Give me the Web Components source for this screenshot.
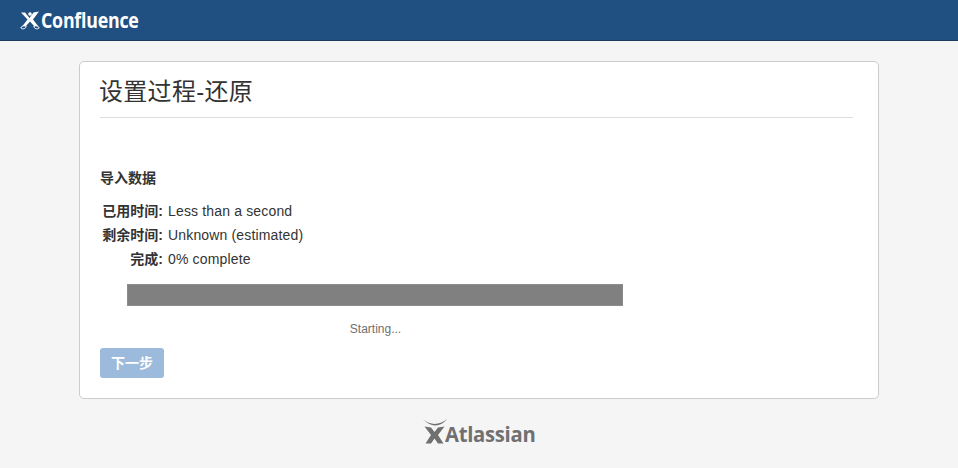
<!DOCTYPE html>
<html>
<head>
<meta charset="utf-8">
<title>Confluence</title>
<style>
  html, body { margin: 0; padding: 0; background: #f5f5f5; }
  body { font: 14px/20px "Liberation Sans", "Noto Sans CJK SC", sans-serif; color: #333; height: 468px; overflow: hidden; }
</style>
</head>
<body>
<app-header></app-header>
<setup-card heading="设置过程-还原">
  <h4 slot="section">导入数据</h4>
  <info-row label="已用时间:">Less than a second</info-row>
  <info-row label="剩余时间:">Unknown (estimated)</info-row>
  <info-row label="完成:">0% complete</info-row>
  <progress-block status="Starting..."></progress-block>
  <next-button>下一步</next-button>
</setup-card>
<app-footer></app-footer>

<script>
class AppHeader extends HTMLElement {
  constructor () {
    super()
    this.attachShadow({ mode: 'open' })
  }

  connectedCallback () {
    this.shadowRoot.innerHTML = `
      <style>
        :host { display: flex; align-items: center; height: 40px; background: #205081; border-bottom: 1px solid #1b3c5f; padding-left: 20px; }
        svg { display: block; width: 20px; height: 20px; margin-right: 1px; }
        span { display: block; padding-bottom: 2px; color: #fff; font: bold 22px/26px "Open Sans", sans-serif; letter-spacing: -.3px; transform: scaleX(.81); transform-origin: left center; }
      </style>
      <svg viewBox="0 0 20 20" fill="none">
        <circle cx="10" cy="4" r="1.800" fill="#fff"/>
        <path d="M1 2.500 L5 2.500 L9.500 8 L13.500 2.500 L19 1.500 L13 9.500 L18 16 L14 16 L10 11.500 L6 16 L2.500 16 L7.500 9.500 Z" fill="#fff"/>
        <path d="M.8 18c.5-2.200 3.700-2.700 5.400-1.600c-.5 2.200-3.200 3.300-5.400 1.600zM19.200 18c-.5-2.200-3.700-2.700-5.400-1.600c.5 2.200 3.200 3.300 5.400 1.600z" stroke="#fff" stroke-width="1"/>
      </svg>
      <span>Confluence</span>
    `
  }
}

class SetupCard extends HTMLElement {
  constructor () {
    super()
    this.attachShadow({ mode: 'open' })
  }

  connectedCallback () {
    this.shadowRoot.innerHTML = `
      <style>
        :host { display: block; box-sizing: border-box; width: 800px; height: 338px; margin: 20px 0 0 79px; padding: 0 25px 0 20px; background: #fff; border: 1px solid #ccc; border-radius: 5px; }
        h2 { margin: 0; padding: 13px 0 8px; font-size: 24px; line-height: 34px; font-weight: normal; letter-spacing: .3px; color: #333; border-bottom: 1px solid #ddd; }
        h2 span { display: block; margin-left: -1px; }
        ::slotted(h4) { margin: 50px 0 11px; font-size: 14px; line-height: 20px; font-weight: bold; color: #333; }
      </style>
      <h2><span>${this.getAttribute('heading')}</span></h2>
      <slot name="section"></slot>
      <slot></slot>
    `
  }
}

class InfoRow extends HTMLElement {
  constructor () {
    super()
    this.attachShadow({ mode: 'open' })
  }

  connectedCallback () {
    this.shadowRoot.innerHTML = `
      <style>
        :host { display: flex; height: 24px; line-height: 24px; font-size: 14px; color: #333; }
        b { width: 63px; margin-right: 5px; text-align: right; white-space: nowrap; }
        span { letter-spacing: .16px; }
      </style>
      <b>${this.getAttribute('label')}</b>
      <span><slot></slot></span>
    `
  }
}

class ProgressBlock extends HTMLElement {
  constructor () {
    super()
    this.attachShadow({ mode: 'open' })
  }

  connectedCallback () {
    this.shadowRoot.innerHTML = `
      <style>
        :host { display: block; width: 496px; margin: 13px 0 0 27px; }
        .bar { height: 22px; box-sizing: border-box; background: #808080; border: 1px solid #8c8c8c; }
        .status { margin-top: 13px; padding-left: 1px; text-align: center; font-size: 12px; line-height: 20px; color: #707070; }
      </style>
      <div class="bar"></div>
      <div class="status">${this.getAttribute('status')}</div>
    `
  }
}

class NextButton extends HTMLElement {
  constructor () {
    super()
    this.attachShadow({ mode: 'open' })
  }

  connectedCallback () {
    this.shadowRoot.innerHTML = `
      <style>
        :host { display: block; width: 64px; height: 30px; margin-top: 9px; }
        button { display: block; width: 100%; height: 100%; padding: 0; border: 0; border-radius: 3px; background: #9cbbdc; color: #fff; font: bold 14px/30px "Liberation Sans", "Noto Sans CJK SC", sans-serif; }
      </style>
      <button disabled><slot></slot></button>
    `
  }
}

class AppFooter extends HTMLElement {
  constructor () {
    super()
    this.attachShadow({ mode: 'open' })
  }

  connectedCallback () {
    this.shadowRoot.innerHTML = `
      <style>
        :host { display: flex; align-items: flex-end; height: 25px; margin: 20px 0 0 423px; }
        svg { display: block; width: 24px; height: 25px; flex: none; margin-right: -2px; }
        span { display: block; color: #707070; font: bold 22px/22px "Open Sans", sans-serif; letter-spacing: -.3px; transform: scaleX(.92); transform-origin: left center; }
      </style>
      <svg viewBox="0 0 24 25">
        <path d="M0 0c7 6.500 16 6.500 24 0c-6 8.500-17 8.500-24 0z" fill="#707070"/>
        <path d="M1.500 7.500 L8 8.500 L11.500 13 L15 8.500 L21.500 7.500 L15 16 L20.500 24.500 L15 24.500 L11.500 19.500 L8 24.500 L2.500 24.500 L8 16 Z" fill="#707070"/>
      </svg>
      <span>Atlassian</span>
    `
  }
}

customElements.define('app-header', AppHeader)
customElements.define('setup-card', SetupCard)
customElements.define('info-row', InfoRow)
customElements.define('progress-block', ProgressBlock)
customElements.define('next-button', NextButton)
customElements.define('app-footer', AppFooter)
</script>
</body>
</html>
